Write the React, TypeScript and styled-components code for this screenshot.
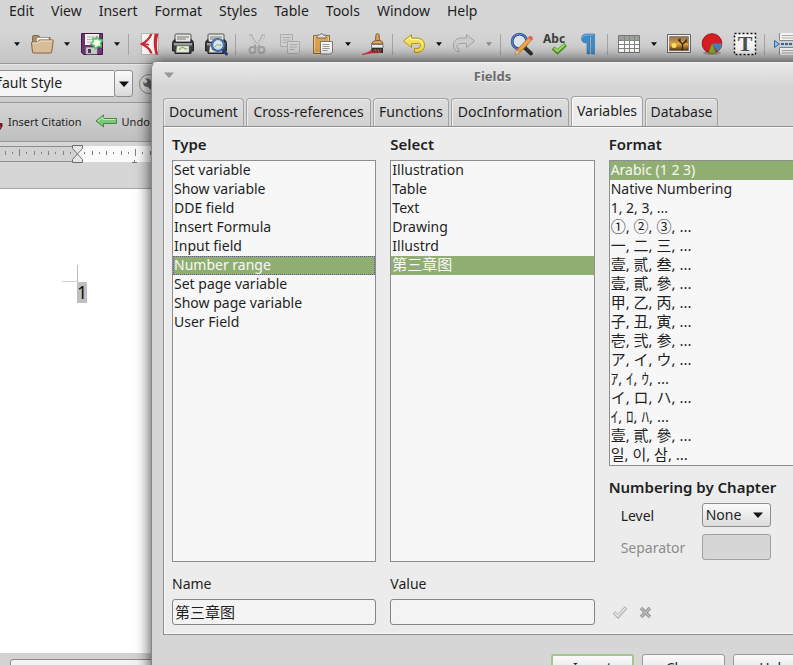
import React, { useState } from "react";
import styled, { createGlobalStyle, css } from "styled-components";

const GlobalStyle = createGlobalStyle`
  *, *::before, *::after { box-sizing: border-box; }
  body { margin: 0; background: #d6d6d6; }
  body, button, input, select {
    font-family: "Noto Sans", "Noto Sans CJK SC", sans-serif;
    font-size: 14px;
    color: #1f1f1f;
  }
`;

const Screen = styled.div`
  position: relative;
  height: 100vh;
  overflow: hidden;
  display: flex;
  flex-direction: column;
  background: #d6d6d6;
`;

const MenuBar = styled.nav`
  display: flex;
  flex: none;
  height: 22px;
  padding-left: 9px;
  gap: 17px;
  white-space: nowrap;
`;

const MenuButton = styled.button`
  border: 0;
  padding: 0;
  background: none;
  line-height: 22px;
`;

const IconBar = styled.div`
  display: flex;
  flex: none;
  align-items: center;
  height: 42px;
  padding: 3px 0 0 8px;
  background: linear-gradient(#d6d6d6 20%, #c4c4c4);
  border-bottom: 1px solid #979797;
`;

const ToolButton = styled.button<{ $narrow?: boolean }>`
  display: flex;
  flex: none;
  align-items: center;
  justify-content: center;
  width: ${(p) => (p.$narrow ? 17 : 33)}px;
  height: 32px;
  padding: 0;
  border: 0;
  background: none;
`;

const Divider = styled.span`
  flex: none;
  width: 1px;
  height: 21px;
  margin: 0 4px 0 3px;
  background: #a4a4a4;
`;

const StyleBar = styled.div`
  display: flex;
  flex: none;
  align-items: center;
  height: 39px;
  background: linear-gradient(#d9d9d9, #cbcbcb);
  border-top: 1px solid #e6e6e6;
  border-bottom: 1px solid #979797;
`;

const StyleInput = styled.input`
  width: 144px;
  height: 27px;
  margin-left: -30px;
  padding: 0 0 2px 8px;
  border: 1px solid #8f8f8f;
  border-right: 0;
  background: #f5f5f5;
`;

const StyleDrop = styled.button`
  display: flex;
  align-items: center;
  justify-content: center;
  width: 19px;
  height: 27px;
  padding: 0;
  border: 1px solid #8f8f8f;
  border-radius: 3px;
  background: linear-gradient(#fafafa, #dadada);
`;

const WrenchButton = styled.button`
  display: flex;
  flex: none;
  width: 22px;
  height: 22px;
  margin-left: 5px;
  padding: 0;
  border: 0;
  background: none;
`;

const CitationBar = styled.div`
  display: flex;
  flex: none;
  align-items: center;
  height: 39px;
  padding-bottom: 2px;
  background: linear-gradient(#d4d4d4, #bfbfbf);
  border-bottom: 1px solid #979797;
`;

const CitationButton = styled.button`
  display: flex;
  align-items: center;
  gap: 4px;
  padding: 0;
  margin-right: 13px;
  border: 0;
  background: none;
  font-size: 11px;
  white-space: nowrap;
`;

const RulerArea = styled.div`
  flex: none;
  height: 47px;
  padding-top: 1px;
  border-bottom: 1px solid #a6a6a6;
`;

const Page = styled.main`
  flex: 1;
  min-height: 0;
  padding: 76px 0 0 62px;
  background: #fff;
`;

const CornerMark = styled.div`
  width: 16px;
  height: 17px;
  border-right: 1px solid #bcbcbc;
  border-bottom: 1px solid #d0d0d0;
`;

const PageNumber = styled.span`
  display: block;
  width: 10px;
  height: 21px;
  margin-left: 15px;
  background: #bfbfbf;
  font-size: 18px;
  line-height: 21px;
  color: #111;
`;

const FooterBar = styled.div`
  display: flex;
  flex: none;
  height: 12px;
  padding: 6px 0 0 10px;
  overflow: hidden;
  background: #d2d2d2;
`;

const FooterInput = styled.input`
  flex: 1;
  height: 27px;
  border: 1px solid #8a8a8a;
  border-radius: 3px;
  background: #f3f3f3;
`;

const Dialog = styled.section`
  position: absolute;
  top: 62px;
  left: 151px;
  right: -40px;
  display: flex;
  flex-direction: column;
  height: 640px;
  padding: 0 10px 0 11px;
  border: 1px solid #858585;
  border-top-color: #f4f4f4;
  border-radius: 6px 6px 0 0;
  background: linear-gradient(#e8e8e8, #d6d6d6 24px);
  box-shadow: 0 0 16px rgba(0, 0, 0, 0.55), 0 -2px 14px rgba(0, 0, 0, 0.3);
`;

const TitleBar = styled.header`
  display: grid;
  grid-template-columns: 20px 1fr 20px;
  align-items: center;
  flex: none;
  height: 26px;
`;

const Title = styled.h1`
  margin: 0;
  font-size: 13px;
  font-weight: 700;
  color: #6b6b6b;
  text-align: center;
  text-shadow: 0 1px #f0f0f0;
`;

const TitleMenu = styled.button`
  display: flex;
  padding: 0 1px 2px;
  border: 0;
  background: none;
`;

const TabStrip = styled.div`
  display: flex;
  flex: none;
  align-items: flex-end;
  gap: 2px;
  height: 37px;
  white-space: nowrap;
`;

const Tab = styled.button<{ $active: boolean; $width: number }>`
  flex: none;
  width: ${(p) => p.$width}px;
  height: 28px;
  padding: 0 0 2px;
  border: 1px solid #a2a2a2;
  border-bottom: 0;
  border-radius: 4px 4px 0 0;
  background: linear-gradient(#dedede, #d0d0d0);
  box-shadow: inset 1px 1px #ececec;
  ${(p) =>
    p.$active &&
    css`
      height: 31px;
      margin-bottom: -1px;
      padding-bottom: 4px;
      background: #ececec;
      box-shadow: inset 1px 1px #fafafa;
    `}
`;

const Panel = styled.div`
  display: grid;
  flex: none;
  grid-template-columns: repeat(3, 1fr);
  column-gap: 14px;
  height: 509px;
  padding: 7px 8px 0;
  border: 1px solid #8e8e8e;
  background: #ececec;
  box-shadow: inset 1px 1px #fafafa, inset 0 -1px #fafafa;
`;

const Column = styled.div`
  display: flex;
  flex-direction: column;
  min-width: 0;
`;

const Heading = styled.h2`
  flex: none;
  margin: 0;
  height: 26px;
  font-size: 15px;
  line-height: 21px;
  font-weight: 600;
  white-space: nowrap;
`;

const SubHeading = styled(Heading)`
  margin-top: 11px;
`;

const List = styled.ul<{ $tall?: boolean }>`
  flex: none;
  height: ${(p) => (p.$tall ? 402 : 306)}px;
  margin: 0;
  padding: 0;
  list-style: none;
  border: 1px solid #8e8e8e;
  background: #f7f7f7;
  overflow: hidden;
`;

const Item = styled.li<{ $selected: boolean; $focused: boolean; $cjk: boolean }>`
  height: 19px;
  padding: 0 1px;
  line-height: 17px;
  font-size: ${(p) => (p.$cjk ? 15 : 14)}px;
  white-space: nowrap;
  ${(p) =>
    p.$selected &&
    css`
      background: #91ae72;
      color: #f8f8f8;
    `}
  ${(p) =>
    p.$focused &&
    css`
      outline: 1px dotted #6e51a8;
      outline-offset: -1px;
    `}
`;

const FieldLabel = styled.label`
  margin: 11px 0 5px;
  line-height: 21px;
`;

const TextField = styled.input`
  width: 100%;
  height: 26px;
  padding: 0 2px 2px;
  border: 1px solid #858585;
  border-radius: 3px;
  background: #f3f3f3;
  font-size: 15px;
`;

const Options = styled.div`
  display: grid;
  grid-template-columns: 81px 69px;
  row-gap: 7px;
  align-items: center;
  padding-left: 12px;
`;

const OptionLabel = styled.label<{ $disabled?: boolean }>`
  color: ${(p) => (p.$disabled ? "#8b8b8b" : "#1f1f1f")};
`;

const SelectWrap = styled.div`
  display: grid;
  align-items: center;
  & > * { grid-area: 1 / 1; }
  & > svg { justify-self: end; margin-right: 8px; pointer-events: none; }
`;

const LevelSelect = styled.select`
  appearance: none;
  width: 100%;
  height: 24px;
  padding: 0 3px 1px;
  border: 1px solid #8e8e8e;
  border-radius: 3px;
  background: linear-gradient(#fafafa, #dcdcdc);
`;

const SeparatorInput = styled.input`
  width: 100%;
  height: 26px;
  border: 1px solid #a0a0a0;
  border-radius: 3px;
  background: #d6d6d6;
`;

const EditActions = styled.div`
  display: flex;
  gap: 9px;
  margin-top: auto;
  padding: 0 0 14px 3px;
`;

const EditButton = styled.button`
  display: flex;
  padding: 0;
  border: 0;
  background: none;
`;

const ButtonRow = styled.footer`
  display: flex;
  justify-content: flex-end;
  gap: 8px;
  padding: 19px 6px 0 0;
`;

const DialogButton = styled.button<{ $primary?: boolean }>`
  width: 83px;
  height: 27px;
  padding: 0;
  border: 1px solid #999;
  border-radius: 3px;
  background: linear-gradient(#fafafa, #dcdcdc);
  line-height: 19px;
  ${(p) => p.$primary && css`border: 2px solid #a4c686;`}
`;

const Arrow = ({ color = "#111", big = false }: { color?: string; big?: boolean }) => (
  <svg width={big ? 10 : 6} height={big ? 6 : 4} viewBox="0 0 10 6" preserveAspectRatio="none">
    <path d="M0 0.5h10L5 6z" fill={color} />
  </svg>
);

const Glyph24 = styled.svg.attrs({ width: 24, height: 24, viewBox: "0 0 24 24" })`
  overflow: visible;
`;

const Icon = ({ children }: { children: React.ReactNode }) => <Glyph24>{children}</Glyph24>;

const OpenIcon = () => (
  <Icon>
    <path d="M2.5 20V4.5q0-1 1-1h5l2 2h9.500V10" fill="#a98c69" stroke="#80674a" />
    <path d="M7 5.500h12V13H6z" fill="#fff" stroke="#8b8b86" strokeWidth=".7" />
    <path d="M8 8h10M8 10h10" stroke="#aaa" strokeWidth=".8" />
    <path d="M2.500 20.500 1.500 11q0-1 1-1h5l2-2h13q.8 0 .7 1l-1.500 11q-.1 1-1 1h-17q-1 0-1.200-.5z" fill="#d8bd98" stroke="#80674a" />
    <path d="M2.600 11h5.200l2-2h12.400" fill="none" stroke="#f2e2cd" />
  </Icon>
);

const SaveIcon = () => (
  <Icon>
    <path d="M1.500 1.500h21v21H3.500l-2-2z" fill="#6a3572" stroke="#3f1a47" />
    <path d="M5 2h14v11H5z" fill="#f0f0ef" />
    <path d="M7 5h10M7 7.500h10M7 10h7" stroke="#b5b5b5" />
    <path d="M6 15.500h11V22H6z" fill="#c9c9c9" stroke="#aaa" strokeWidth=".6" />
    <path d="M8 17h3v4H8z" fill="#4b3550" />
    <path d="m17 4.500 1.700 3.200 3.800.4-2 3.100.9 3.600-3.500-.6-2.600 2.700-1.300-3.500-3.500-1.200 2.700-2.500-.4-3.500 3.200 1z" fill="#f5fff0" stroke="#52c85d" strokeWidth="1.500" strokeLinejoin="round" />
  </Icon>
);

const PdfIcon = () => (
  <Icon>
    <path d="M3.500 1.500h17v21h-17z" fill="#f4f4f4" stroke="#999" strokeWidth=".6" />
    <path d="M13.500 2C11 7 8 10 4 12c4 2 8 4.500 9.500 9.500" fill="none" stroke="#c92830" strokeWidth="2.200" />
    <path d="M4 12.300q4-1 7 .7" stroke="#c92830" strokeWidth="1.500" fill="none" />
    <path d="M15.500 1.800h5q-3 10-.5 20.700h-2.500Q14.500 12 16.500 2z" fill="#c92830" />
  </Icon>
);

const PrinterBody = () => (
  <>
    <path d="M4 3q0-1 1-1h14q1 0 1 1v7H4z" fill="#e5e5e2" stroke="#555" />
    <path d="M6 5h12M6 7h9" stroke="#777" />
    <path d="M1.500 11.500q0-3 2.500-4v3h16v-3q2.500 1 2.500 4V19H20v2.500H4V19H1.500z" fill="#3e4240" stroke="#242424" />
    <path d="M3 11h18v2.500H3z" fill="#9ba09c" />
    <path d="M6 14h12v6.500H5z" fill="#f7f9ed" stroke="#888" strokeWidth=".5" />
    <path d="M8 18q3-4 5-2t3 0" stroke="#94bf66" strokeWidth="1.500" fill="none" />
  </>
);

const PrintIcon = () => <Icon><PrinterBody /></Icon>;
const PreviewIcon = () => (
  <Icon>
    <PrinterBody />
    <path d="m18 17 4.500 5" stroke="#29437a" strokeWidth="3" strokeLinecap="round" />
    <circle cx="14" cy="13" r="6" fill="#d8e6ec" stroke="#254c9b" strokeWidth="2.200" />
    <circle cx="14" cy="13" r="6" fill="none" stroke="#8eaee0" strokeWidth=".6" />
    <path d="M11 15q2-4 4-2t2-1" stroke="#8cad69" fill="none" />
  </Icon>
);

const CutIcon = () => (
  <Icon>
    <g fill="none" stroke="#a3a3a3">
      <path d="M5.500 2.500q1 5 8 13M18.500 2.500q-1 5-8 13" strokeWidth="3" />
      <path d="M5.500 3.500q1 5 7.500 11M18.500 3.500q-1 5-7.500 11" stroke="#d4d4d4" strokeWidth="1.800" />
      <circle cx="7.500" cy="18" r="3" strokeWidth="2" />
      <circle cx="16.500" cy="18" r="3" strokeWidth="2" />
      <path d="m9 15 2-2M15 15l-2-2" strokeWidth="2" />
    </g>
  </Icon>
);

const CopyIcon = () => (
  <Icon>
    <g fill="#d2d2d2" stroke="#ababab">
      <path d="M2.500 2.500h12v12h-12z" />
      <path d="M4.500 5.500h8M4.500 8h8M4.500 10.500h5" />
      <path d="M9.500 9.500h12v11l-2 1h-10z" />
      <path d="M11.500 12.500h8M11.500 15h8M11.500 17.500h5" />
    </g>
  </Icon>
);

const PasteIcon = () => (
  <Icon>
    <path d="M2.500 3.500h16v18h-16z" fill="#daa252" stroke="#936626" />
    <path d="M3.500 4.500h14v16h-14z" fill="none" stroke="#efc786" />
    <path d="M6 3h2.500q2-3 4 0H15v3H6z" fill="#ddd" stroke="#6c6c6c" />
    <path d="M9.500 9.500h12V20l-2 2h-10z" fill="#f7f7f7" stroke="#777" />
    <path d="M11.500 12.500h7M11.500 14.500h7M11.500 16.500h7M11.500 18.500h5" stroke="#9a9a9a" />
  </Icon>
);

const BrushIcon = () => (
  <Icon>
    <path d="M1 22q6-1 10-5l10-1-1 5q-10 0-19 2z" fill="#d9303b" />
    <path d="M14.500 9 15 2.500q1.500-2 3 0l.500 6.500z" fill="#d9a464" stroke="#885b25" />
    <path d="M10.500 12q1-3 4-3.500h4.500q3 .5 3 3.500z" fill="#d9a464" stroke="#885b25" />
    <path d="M10.500 12.500H22V16H10.500z" fill="#eee" stroke="#777" />
    <path d="M10.500 16H22v5l-11-1z" fill="#33302f" />
    <path d="m12 20 2-3 1 3 2-3 1 4 2-4" stroke="#cf4c50" fill="none" />
  </Icon>
);

const UndoIcon = () => (
  <Icon>
    <path d="M1.500 9 9.500 2.500V6H14q8 0 8.500 6.500T16 20.500h-3.500v-4H15q3.500 0 3.500-3T14 11.500H9.500v4z" fill="#f4df57" stroke="#b29713" strokeLinejoin="round" />
    <path d="M3.500 9 8.500 5v2.500H14q6.500 0 7 5" stroke="#fff9b5" fill="none" />
  </Icon>
);

const RedoIcon = () => (
  <Icon>
    <path d="m22.500 9-8-6.500V6H10Q2 6 1.500 12.500T7 20v-3q-3-1-2-3.500t5-2h4.500v4z" fill="#cbcbcb" stroke="#a3a3a3" strokeLinejoin="round" />
  </Icon>
);

const FindIcon = () => (
  <Icon>
    <path d="m15 16 6 5.500" stroke="#333" strokeWidth="4" strokeLinecap="round" />
    <circle cx="9.500" cy="9.500" r="7.300" fill="#dbe4ed" stroke="#2e4d9c" strokeWidth="2.800" />
    <circle cx="9.500" cy="9.500" r="7.500" fill="none" stroke="#95abda" strokeWidth=".7" />
    <path d="m6.500 18.500 13-14 3 2.500-13 14-4.500 1.500z" fill="#f0a64c" stroke="#b56b1c" strokeWidth=".8" />
    <path d="m18 6 3 2.500 2-2q0-3-3-2.500z" fill="#e96456" />
    <path d="m6.500 18.500 3 2.500-4.500 1.500z" fill="#f7dbb1" />
  </Icon>
);

const SpellIcon = () => (
  <Icon>
    <text x="0" y="11" fontFamily="Noto Sans" fontWeight="700" fontSize="12" fill="#3e3e3e">Abc</text>
    <path d="m10 16 4.500 4 8-7.500" fill="none" stroke="#4b9a1d" strokeWidth="4" />
    <path d="m11 16.200 3.500 3 7-6.500" fill="none" stroke="#a9e073" strokeWidth="1.800" />
  </Icon>
);

const PilcrowIcon = () => (
  <Icon>
    <path d="M18.500 2v20h-3V4H14v18h-3V11Q5.500 11 5.500 6.500T11 2z" fill="#3d8cc8" stroke="#2b6ca2" strokeWidth=".6" />
    <path d="M6.500 6q0-3 5-3h6" fill="none" stroke="#79bbea" />
  </Icon>
);

const TableIcon = () => (
  <Icon>
    <path d="M1.500 3.500h21v17h-21z" fill="#fff" stroke="#777" />
    <path d="M2 4h20v4H2z" fill="#9ba197" />
    <path d="M2 8.500h20M2 12.500h20M2 16.500h20M7.500 4v16M12.500 4v16M17.500 4v16" stroke="#85887f" />
  </Icon>
);

const PictureIcon = () => (
  <Icon>
    <defs>
      <linearGradient id="sunset" x1="0" y1="0" x2="0" y2="1">
        <stop offset="0" stopColor="#887257" />
        <stop offset=".55" stopColor="#e7a33a" />
        <stop offset="1" stopColor="#4f3514" />
      </linearGradient>
    </defs>
    <path d="M.5 2.500h23v18H.5z" fill="#f4f4f4" stroke="#666" />
    <path d="M2.500 4.500h19v14h-19z" fill="url(#sunset)" stroke="#65573f" strokeWidth=".5" />
    <circle cx="7" cy="13.500" r="2.500" fill="#ffdc68" />
    <path d="M15 18.500q1-5 0-7l-4-4M15.500 12.500l4.500-5M13 9.500V6.500M17.500 10h3" stroke="#37260f" strokeWidth="1.200" fill="none" />
  </Icon>
);

const ChartIcon = () => (
  <Icon>
    <ellipse cx="12" cy="21" rx="9" ry="2" fill="#000" opacity=".2" />
    <circle cx="12" cy="11.500" r="9.800" fill="#d71e25" stroke="#a80f17" />
    <path d="M12 11.500h9.800q0 5-4.300 8.300z" fill="#4a82bd" />
    <path d="m12 11.500 4 9.500q-4 1-7.500-.3z" fill="#6fb32d" />
  </Icon>
);

const TextBoxIcon = () => (
  <Icon>
    <path d="M1.500 1.500h21v21h-21z" fill="#f5f5f5" stroke="#111" strokeWidth="1.500" strokeDasharray="2 2" />
    <text x="12" y="19" textAnchor="middle" fontFamily="Liberation Serif" fontWeight="700" fontSize="22" fill="#4b5153">T</text>
  </Icon>
);

const BreakIcon = () => (
  <Icon>
    <path d="M5.500 1v7.500H24V1" fill="#f3f3f3" stroke="#888" />
    <path d="M8 3.500h14M8 6h14" stroke="#aaa" />
    <path d="M5.500 23v-7.500H24V23" fill="#f3f3f3" stroke="#888" />
    <path d="M8 18.500h14M8 21h14" stroke="#aaa" />
    <path d="m.5 8.500 5 3.500-5 3.500z" fill="#9dbbe0" stroke="#3266a5" />
    <path d="M7 12h17" stroke="#3266a5" strokeWidth="2" strokeDasharray="3 1" />
  </Icon>
);

const WrenchIcon = () => (
  <svg width="22" height="22" viewBox="0 0 22 22">
    <circle cx="11" cy="11" r="9.500" fill="#d9d9d5" stroke="#85857f" />
    <path d="M7 5.500 9.500 8 8 10.500 5 9q0 5 5 5l4 4 3-3-4-4q1-4-2.500-5.500z" fill="#666" />
  </svg>
);

const Ruler = () => {
  const ticks = [];
  for (let i = -10; i <= 11; i++) {
    if (i === 0) continue;
    const tall = i % 8 === 0;
    const half = i % 2 === 0;
    const h = tall ? 7 : half ? 4 : 2;
    ticks.push(
      <rect key={i} x={Math.round(77 + i * 7.25)} y={tall ? 6 : half ? 8 : 9} width="1" height={h} fill="#808080" />
    );
  }
  return (
    <svg width="100%" height="21" role="img" aria-label="Ruler">
      <rect x="0" y="3" width="100%" height="15" fill="#d2d2d2" />
      <rect x="77" y="3" width="100%" height="16" fill="#fafafa" />
      <path d="M0 3.500h77M0 18.500h77" stroke="#8f8f8f" />
      {ticks}
      <path d="M132 19.500h5M134.500 17v3" stroke="#777" />
      <path d="M72.500 2.500h10v3L77.500 11l-5-5.500zM72.500 19.500h10v-3L77.500 11l-5 5.500z" fill="#e6e6e6" stroke="#6c6c6c" />
    </svg>
  );
};

type Tool = { name: string; icon?: () => React.JSX.Element; menu?: boolean; faded?: boolean; divider?: boolean };

const tools: Tool[] = [
  { name: "New", menu: true },
  { name: "Open", icon: OpenIcon, menu: true },
  { name: "Save", icon: SaveIcon, menu: true, divider: true },
  { name: "Export as PDF", icon: PdfIcon },
  { name: "Print", icon: PrintIcon },
  { name: "Print Preview", icon: PreviewIcon, divider: true },
  { name: "Cut", icon: CutIcon },
  { name: "Copy", icon: CopyIcon },
  { name: "Paste", icon: PasteIcon, menu: true },
  { name: "Clone Formatting", icon: BrushIcon, divider: true },
  { name: "Undo", icon: UndoIcon, menu: true },
  { name: "Redo", icon: RedoIcon, menu: true, faded: true, divider: true },
  { name: "Find and Replace", icon: FindIcon },
  { name: "Spelling", icon: SpellIcon },
  { name: "Formatting Marks", icon: PilcrowIcon, divider: true },
  { name: "Insert Table", icon: TableIcon, menu: true },
  { name: "Insert Image", icon: PictureIcon },
  { name: "Insert Chart", icon: ChartIcon },
  { name: "Insert Text Box", icon: TextBoxIcon, divider: true },
  { name: "Insert Page Break", icon: BreakIcon },
];

const menus = ["Edit", "View", "Insert", "Format", "Styles", "Table", "Tools", "Window", "Help"];

const tabs = [
  { name: "Document", width: 81 },
  { name: "Cross-references", width: 125 },
  { name: "Functions", width: 76 },
  { name: "DocInformation", width: 118 },
  { name: "Variables", width: 72 },
  { name: "Database", width: 73 },
];

const types = [
  "Set variable", "Show variable", "DDE field", "Insert Formula", "Input field",
  "Number range", "Set page variable", "Show page variable", "User Field",
];

const selections = ["Illustration", "Table", "Text", "Drawing", "Illustrd", "第三章图"];

const formats = [
  "Arabic (1 2 3)", "Native Numbering", "1, 2, 3, ...", "①, ②, ③, ...", "一, 二, 三, ...",
  "壹, 贰, 叁, ...", "壹, 貳, 參, ...", "甲, 乙, 丙, ...", "子, 丑, 寅, ...", "壱, 弐, 参, ...",
  "ア, イ, ウ, ...", "ｱ, ｲ, ｳ, ...", "イ, ロ, ハ, ...", "ｲ, ﾛ, ﾊ, ...", "壹, 貳, 參, ...",
  "일, 이, 삼, ...",
];

type ListBoxProps = { id: string; items: string[]; initial: number; tall?: boolean; focused?: boolean };

const ListBox = ({ id, items, initial, tall, focused = false }: ListBoxProps) => {
  const [selected, setSelected] = useState(initial);
  return (
    <List role="listbox" aria-labelledby={id} tabIndex={0} $tall={tall}>
      {items.map((text, i) => (
        <Item
          key={i}
          role="option"
          aria-selected={i === selected}
          $selected={i === selected}
          $focused={focused && i === selected}
          $cjk={/[^\x00-\x7f]/.test(text)}
          onClick={() => setSelected(i)}
        >
          {text}
        </Item>
      ))}
    </List>
  );
};

export default function App() {
  const [tab, setTab] = useState("Variables");
  return (
    <Screen>
      <GlobalStyle />
      <MenuBar>
        {menus.map((m) => <MenuButton key={m}>{m}</MenuButton>)}
      </MenuBar>
      <IconBar role="toolbar" aria-label="Standard">
        {tools.map(({ name, icon: Glyph, menu, faded, divider }) => (
          <React.Fragment key={name}>
            {Glyph && <ToolButton aria-label={name}><Glyph /></ToolButton>}
            {menu && (
              <ToolButton $narrow aria-label={`${name} options`}>
                <Arrow color={faded ? "#8a8a8a" : "#111"} />
              </ToolButton>
            )}
            {divider && <Divider />}
          </React.Fragment>
        ))}
      </IconBar>
      <StyleBar>
        <StyleInput aria-label="Paragraph style" defaultValue="Default Style" />
        <StyleDrop aria-label="Show styles"><Arrow big /></StyleDrop>
        <WrenchButton aria-label="Update style"><WrenchIcon /></WrenchButton>
      </StyleBar>
      <CitationBar>
        <CitationButton>
          <svg width="4" height="24" viewBox="0 0 4 24">
            <path d="M0 14h2q2 3-2 7v-2q1-1 0-2z" fill="#7b1220" />
          </svg>
          Insert Citation
        </CitationButton>
        <CitationButton>
          <svg width="23" height="16" viewBox="0 0 23 16">
            <path d="M1 8 8.500 2v3.500h13v5h-13V14z" fill="#7cc679" stroke="#418842" strokeLinejoin="round" />
            <path d="M3 8 8 4v2.500h12.500" fill="none" stroke="#c1efbb" />
          </svg>
          Undo
        </CitationButton>
      </CitationBar>
      <RulerArea><Ruler /></RulerArea>
      <Page>
        <CornerMark />
        <PageNumber>1</PageNumber>
      </Page>
      <FooterBar><FooterInput aria-label="Find text" /></FooterBar>

      <Dialog role="dialog" aria-labelledby="dialog-title">
        <TitleBar>
          <TitleMenu aria-label="Window menu"><Arrow big color="#999" /></TitleMenu>
          <Title id="dialog-title">Fields</Title>
        </TitleBar>
        <TabStrip role="tablist">
          {tabs.map((t) => (
            <Tab
              key={t.name}
              role="tab"
              aria-selected={t.name === tab}
              $active={t.name === tab}
              $width={t.width}
              onClick={() => setTab(t.name)}
            >
              {t.name}
            </Tab>
          ))}
        </TabStrip>
        <Panel role="tabpanel">
          <Column>
            <Heading id="type-heading">Type</Heading>
            <ListBox id="type-heading" items={types} initial={5} tall focused />
            <FieldLabel htmlFor="name">Name</FieldLabel>
            <TextField id="name" defaultValue="第三章图" />
          </Column>
          <Column>
            <Heading id="select-heading">Select</Heading>
            <ListBox id="select-heading" items={selections} initial={5} tall />
            <FieldLabel htmlFor="value">Value</FieldLabel>
            <TextField id="value" />
          </Column>
          <Column>
            <Heading id="format-heading">Format</Heading>
            <ListBox id="format-heading" items={formats} initial={0} />
            <SubHeading as="h3">Numbering by Chapter</SubHeading>
            <Options>
              <OptionLabel htmlFor="level">Level</OptionLabel>
              <SelectWrap>
                <LevelSelect id="level" defaultValue="None">
                  <option>None</option>
                  <option>1</option>
                  <option>2</option>
                </LevelSelect>
                <Arrow big />
              </SelectWrap>
              <OptionLabel htmlFor="separator" $disabled>Separator</OptionLabel>
              <SeparatorInput id="separator" disabled />
            </Options>
            <EditActions>
              <EditButton aria-label="Apply">
                <svg width="16" height="16" viewBox="0 0 16 16">
                  <path d="m2 8.500 4 4 8-9" fill="none" stroke="#b0b0b0" strokeWidth="3.500" />
                  <path d="m2.500 9 3.500 3 7.500-8" fill="none" stroke="#e4e4e4" strokeWidth="1.800" />
                </svg>
              </EditButton>
              <EditButton aria-label="Delete">
                <svg width="16" height="16" viewBox="0 0 16 16">
                  <path d="m4 4 9 9M13 4l-9 9" stroke="#959595" strokeWidth="3.500" />
                  <path d="m4 4 9 9M13 4l-9 9" stroke="#bbb" strokeWidth="1.500" />
                </svg>
              </EditButton>
            </EditActions>
          </Column>
        </Panel>
        <ButtonRow>
          <DialogButton $primary>Insert</DialogButton>
          <DialogButton>Close</DialogButton>
          <DialogButton>Help</DialogButton>
        </ButtonRow>
      </Dialog>
    </Screen>
  );
}
